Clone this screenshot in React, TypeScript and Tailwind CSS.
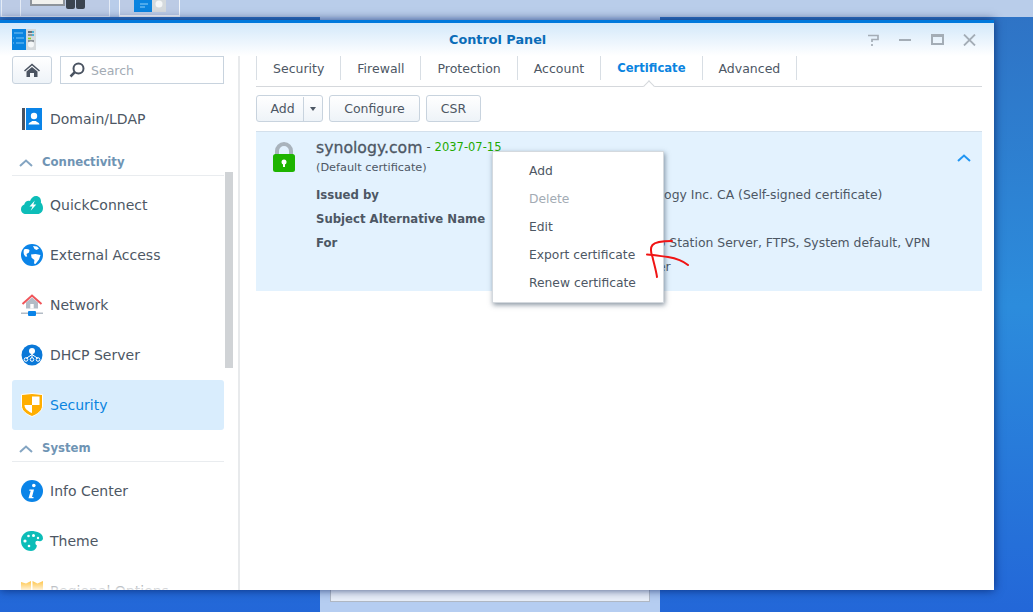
import React from 'react';

const font = "font-['DejaVu_Sans','Liberation_Sans',sans-serif]";

function WindowIcon() {
  return (
    <svg width="24" height="21" viewBox="0 0 24 21">
      <rect x="0" y="0" width="14" height="21" fill="#0a84e0" />
      <rect x="14" y="0" width="10" height="21" fill="#d5dadd" />
      <path d="M2 4h9M4 9h8M4 14h8M1 9h1M1 14h1" stroke="#7cc4f5" strokeWidth="1" />
      <path d="M16 3h4" stroke="#444c55" strokeWidth="1.5" />
      <path d="M20 3h2M20 6h2" stroke="#20a8d8" strokeWidth="1.5" />
      <path d="M16 6h4M16 12h6" stroke="#444c55" strokeWidth="1.2" />
      <path d="M16 9.5h3" stroke="#8ccf20" strokeWidth="1.6" />
      <circle cx="19" cy="15.5" r="3" fill="#f4f7f8" />
    </svg>
  );
}

function DomainIcon() {
  return (
    <svg width="20" height="22" viewBox="0 0 20 22">
      <rect x="0" y="0" width="3" height="22" fill="#4a5361" />
      <rect x="4" y="0" width="16" height="22" fill="#0a84e8" />
      <circle cx="12" cy="8" r="3.2" fill="#fff" />
      <path d="M6.5 16.5c0-2 3-2.6 3.7-3.6h3.6c.7 1 3.7 1.6 3.7 3.6z" fill="#fff" />
    </svg>
  );
}

function QuickConnectIcon() {
  return (
    <svg width="22" height="18" viewBox="0 0 22 18">
      <path d="M5 18c-3 0-5-2-5-4.800 0-2.300 1.300-4 3.300-4.600C3.800 5.500 6.500 4.200 9 5 10 2 12.500 0 15 0c3 0 5 2.300 5 5.200 0 .5 0 1-.2 1.400C21 7.800 22 9.800 22 12c0 3.500-2.400 6-5.500 6z" fill="#0dbdb8" />
      <path d="M13.800 4.500 8.500 10.500h3l-1.800 4.300 5.600-6.300h-3z" fill="#fff" />
    </svg>
  );
}

function GlobeIcon() {
  return (
    <svg width="22" height="22" viewBox="0 0 22 22">
      <circle cx="11" cy="11" r="11" fill="#0a84e8" />
      <path d="M3 5.500c2-.6 4-.6 5.500.4l-.5 2.600-2.500 1.500.7 2.500-1.500.3C3 11.500 2 8.500 3 5.500z" fill="#fff" />
      <path d="M12 2l4 .5 2 2-2.500 1.500-2-1zM10 10.500l4.500-.5 5 1-1.500 4.500-3.500 4.500-1.500-.4.400-3.600-2.800-2.200z" fill="#fff" />
    </svg>
  );
}

function NetworkIcon() {
  return (
    <svg width="22" height="22" viewBox="0 0 22 22">
      <path d="M5 8.500 11 3.500l6 5v6H5z" fill="#b3bcc6" />
      <rect x="9.300" y="10" width="3.400" height="4.500" fill="#fff" />
      <path d="M1.500 10 11 1.500 20.500 10" fill="none" stroke="#f0555a" strokeWidth="2" />
      <rect x="0" y="18.500" width="22" height="1.500" fill="#b3bcc6" />
      <rect x="7" y="17" width="8" height="5" rx="1" fill="#0a84e8" />
    </svg>
  );
}

function DhcpIcon() {
  return (
    <svg width="22" height="22" viewBox="0 0 22 22">
      <circle cx="11" cy="11" r="10.500" fill="#0a78d8" />
      <circle cx="11" cy="7" r="3" fill="#fff" />
      <path d="M11 9v5M11 10.500 5 14.500M11 10.500l6 4" stroke="#fff" strokeWidth="1" fill="none" />
      <circle cx="5" cy="15.500" r="1.800" fill="none" stroke="#fff" strokeWidth="1" />
      <circle cx="11" cy="15.500" r="1.800" fill="none" stroke="#fff" strokeWidth="1" />
      <circle cx="17" cy="15.500" r="1.800" fill="none" stroke="#fff" strokeWidth="1" />
    </svg>
  );
}

function ShieldIcon() {
  return (
    <svg width="24" height="24" viewBox="0 0 24 24">
      <path d="M1.500 1.500 12 .5l10.500 1v11.500c0 4.500-5 8.500-10.500 10.500C6.500 21.500 1.500 17.500 1.500 13z" fill="#ffae00" stroke="#fff" strokeWidth="1" />
      <path d="M12 3.500h7.500v8.500H12zM4.500 12H12v8C8.500 18.500 4.500 16 4.500 12z" fill="#fff" />
    </svg>
  );
}

function InfoIcon() {
  return (
    <svg width="22" height="22" viewBox="0 0 22 22">
      <circle cx="11" cy="11" r="11" fill="#0a84e8" />
      <circle cx="12.800" cy="5.500" r="1.800" fill="#fff" />
      <path d="M8.500 9.500h4.500l-2 7.500h1.500v1.200H7.500l2.200-7.500H8.200z" fill="#fff" />
    </svg>
  );
}

function PaletteIcon() {
  return (
    <svg width="22" height="20" viewBox="0 0 22 20">
      <path d="M10 0c6 0 12 2 12 7.500 0 2.500-3 3-5 2.800-2-.2-2.500 1.800-1.500 3.200 1 1.600-.5 6.500-5.500 6.500C4 20 0 15.500 0 10S4 0 10 0z" fill="#0dbdb8" />
      <circle cx="4" cy="10" r="1.600" fill="#fff" />
      <circle cx="7.500" cy="5" r="1.300" fill="#fff" />
      <circle cx="12.500" cy="4.500" r="1.500" fill="#fff" />
      <circle cx="17" cy="7" r="1.200" fill="#fff" />
      <circle cx="16.500" cy="12" r="2.200" fill="#fff" />
      <circle cx="8" cy="15" r="1.300" fill="#fff" />
    </svg>
  );
}

function RegionalIcon() {
  return (
    <svg width="22" height="22" viewBox="0 0 22 22">
      <path d="M0 2l5 1.500L10 1v16l-5 3-5-2z" fill="#ffae00" />
      <path d="M11.500 1l5 2.500L22 1v16l-5.500 3-5-3z" fill="#ffae00" />
      <circle cx="14" cy="16" r="4" fill="#f0555a" />
    </svg>
  );
}

function LockIcon() {
  return (
    <svg width="22" height="30" viewBox="0 0 22 30">
      <path d="M4 13V9a7 7 0 0 1 14 0v4" fill="none" stroke="#a9b3bc" strokeWidth="4" />
      <rect x="0" y="12" width="22" height="18" rx="2.500" fill="#1eb400" />
      <circle cx="11" cy="20" r="2.500" fill="#fff" />
      <rect x="10" y="20" width="2" height="5" fill="#fff" />
    </svg>
  );
}

function Chevron({ className }: { className: string }) {
  return (
    <svg className={className} width="14" height="8" viewBox="0 0 14 8">
      <path d="M1 7l6-5.500L13 7" fill="none" stroke="currentColor" strokeWidth="2" />
    </svg>
  );
}

function NavItem({ icon, label, active }: { icon: React.ReactNode; label: string; active?: boolean }) {
  return (
    <div className={`flex h-[50px] shrink-0 items-center rounded-[3px] ${active ? 'bg-[#d9edfd] text-[#0a84e0]' : 'text-[#4d5764]'}`}>
      <div className="flex w-[38px] justify-center pl-[2px]">{icon}</div>
      <span className="text-[14px]">{label}</span>
    </div>
  );
}

function NavHeader({ label, h }: { label: string; h: string }) {
  return (
    <div className={`mb-[4px] flex shrink-0 items-center border-b border-[#e9ecef] pt-[7px] text-[#6f94b4] ${h}`}>
      <Chevron className="ml-[7px] mr-[9px] text-[#84a5c2]" />
      <span className="text-[11.7px] font-bold">{label}</span>
    </div>
  );
}

const tabs = ['Security', 'Firewall', 'Protection', 'Account', 'Certificate', 'Advanced'];

function Tabs() {
  return (
    <div className="relative mx-[16px] mr-[12px] flex h-[31px] shrink-0 items-start border-b border-[#d5d8dc]">
      {tabs.map((t) => (
        <div key={t} className={`flex h-[24px] items-center border-l border-[#d8dee4] px-[16px] pt-[2px] ${t === 'Certificate' ? 'text-[11.6px] font-bold text-[#0a84e0]' : 'text-[12.5px] text-[#4d5764]'}`}>
          {t}
        </div>
      ))}
      <div className="h-[24px] border-l border-[#d8dee4]" />
      <div className="absolute left-[389px] top-[26px] h-[8px] w-[8px] rotate-45 border-l border-t border-[#d5d8dc] bg-white" />
    </div>
  );
}

const btn = 'flex h-[27px] items-center justify-center rounded-[3px] border border-[#c8d3de] bg-[linear-gradient(180deg,#ffffff,#eef3f8)] pt-[1px] text-[12.5px] text-[#4d5764]';

function Toolbar() {
  return (
    <div className="ml-[16px] mt-[8px] flex shrink-0 gap-[6px]">
      <div className={`${btn} w-[67px]`}>
        <span className="flex h-full w-[47px] items-center justify-center border-r border-[#c8d3de] pl-[5px]">Add</span>
        <span className="flex flex-1 justify-center">
          <span className="border-x-[3.5px] border-t-[4px] border-x-transparent border-t-[#4d5764]" />
        </span>
      </div>
      <div className={`${btn} w-[91px]`}>Configure</div>
      <div className={`${btn} w-[55px]`}>CSR</div>
    </div>
  );
}

function Row({ label, children }: { label: string; children?: React.ReactNode }) {
  return (
    <div className="flex min-h-[24px] leading-[24px]">
      <span className="w-[314px] shrink-0 text-[11.7px] font-bold text-[#4d5764]">{label}</span>
      <span className="w-[320px] text-[12.4px] text-[#4d5764]">{children}</span>
    </div>
  );
}

function CertCard() {
  return (
    <div className="mx-[16px] mr-[12px] mt-[9px] flex h-[160px] shrink-0 border-t border-[#d3e0ec] bg-[#e3f2fe]">
      <div className="w-[60px] pl-[17px] pt-[10px]">
        <LockIcon />
      </div>
      <div className="flex-1 pt-[5px]">
        <div className="flex h-[21px] items-center">
          <span className="text-[15.7px] text-[#4d5764] [-webkit-text-stroke:0.3px_#4d5764]">synology.com</span>
          <span className="ml-[4px] text-[11.5px] text-[#4d5764]">-</span>
          <span className="ml-[4px] text-[11.5px] text-[#1faa00]">2037-07-15</span>
        </div>
        <div className="mb-[5px] flex h-[20px] items-center text-[11.3px] text-[#4d5764]">(Default certificate)</div>
        <Row label="Issued by">Synology Inc. CA (Self-signed certificate)</Row>
        <Row label="Subject Alternative Name" />
        <Row label="For">Photo Station Server, FTPS, System default, VPN Server</Row>
      </div>
      <div className="pr-[11px] pt-[22px]">
        <Chevron className="text-[#2196f3]" />
      </div>
    </div>
  );
}

const menuItems = ['Add', 'Delete', 'Edit', 'Export certificate', 'Renew certificate'];

function ContextMenu() {
  return (
    <div className="absolute left-[492px] top-[128px] z-20 w-[172px] border border-[#d4d9de] bg-white py-[5px] shadow-[1px_2px_5px_rgba(60,80,100,0.6)]">
      {menuItems.map((m) => (
        <div key={m} className={`flex h-[28px] items-center pl-[36px] text-[12.3px] ${m === 'Delete' ? 'text-[#a3abb4]' : 'text-[#4d5764]'}`}>
          {m}
        </div>
      ))}
    </div>
  );
}

function Scribble() {
  return (
    <svg className="absolute left-[640px] top-[212px] z-30" width="60" height="50" viewBox="0 0 60 50">
      <path d="M32 6C24 6 15 7 12.500 10 10 13 11 18 12.500 22 14 29 16 35 17 42" fill="none" stroke="#f01414" strokeWidth="2" strokeLinecap="round" />
      <path d="M7 19.500C14 20 20 21 28 22 34 23 42 25 48 30" fill="none" stroke="#f01414" strokeWidth="2" strokeLinecap="round" />
    </svg>
  );
}

function Taskbar() {
  return (
    <div className="flex h-[17px] shrink-0 overflow-hidden bg-[#b9cdea]">
      <div className="ml-[1px] h-[17px] w-[20px] border-x border-b border-[#e4ebf6] bg-[#bccbe5]" />
      <div className="relative flex h-[17px] w-[89px] justify-center border-r border-b border-[#e4ebf6] bg-[#bccbe5]">
        <div className="ml-[-16px] flex items-start gap-[1px]">
          <div className="h-[6px] w-[35px] border-2 border-t-0 border-[#8e949b] bg-[#f1f1ee]" />
          <div className="h-[9px] w-[9px] rounded-b-[2px] bg-[#3b4450]" />
          <div className="h-[9px] w-[9px] rounded-b-[2px] bg-[#3b4450]" />
        </div>
      </div>
      <div className="ml-[9px] flex h-[17px] w-[61px] justify-center border-x border-b-2 border-[#f3f6fb] bg-[#bccbe5]">
        <svg width="32" height="12" viewBox="0 0 32 12">
          <rect width="18" height="12" fill="#0a84e0" />
          <rect x="18" width="14" height="12" fill="#d5dadd" />
          <path d="M6 4h8M6 7h5" stroke="#8fd0f8" strokeWidth="1" />
          <circle cx="25" cy="4" r="3.500" fill="#f4f7f8" />
        </svg>
      </div>
    </div>
  );
}

export default function App() {
  return (
    <div className={`${font} relative flex h-[612px] w-[1033px] flex-col overflow-hidden bg-[linear-gradient(180deg,#2f72c4_0%,#2c8cdc_50%,#2367d8_100%)]`}>
      <Taskbar />
      {/* window behind the control panel */}
      <div className="absolute bottom-0 left-[320px] top-[17px] w-[340px] bg-[#b5cdf1]">
        <div className="absolute bottom-[10px] left-[10px] h-[30px] w-[320px] border border-[#b0b8c4] bg-[#e8eef8]" />
      </div>
      <div className="relative z-10 mt-[3px] flex h-[570px] w-[994px] flex-col border-t-[3px] border-[#0078dc] bg-white shadow-[0_0_9px_rgba(0,25,90,0.75)]">
        <div className="flex h-[33px] shrink-0 items-center bg-[linear-gradient(180deg,#d3e8fa,#ffffff)] pl-[12px]">
          <WindowIcon />
          <div className="flex-1 pl-[413px] text-left text-[12.8px] font-semibold text-[#0a6cb8]">Control Panel</div>
          <div className="flex items-center pr-[18px] text-[#a4adb6]">
            <svg className="mr-[20px]" width="12" height="12" viewBox="0 0 12 12">
              <path d="M1 1.500h10V5.500H5V8M5 10v2" fill="none" stroke="currentColor" strokeWidth="1.700" />
            </svg>
            <div className="mr-[20px] h-[2px] w-[12px] bg-current" />
            <div className="mr-[19px] h-[11px] w-[13px] border-[2px] border-t-[3px] border-current" />
            <svg width="13" height="12" viewBox="0 0 13 12">
              <path d="M1 .5l11 11M12 .5l-11 11" fill="none" stroke="currentColor" strokeWidth="1.800" />
            </svg>
          </div>
        </div>
        <div className="flex min-h-0 flex-1">
          <div className="relative flex w-[240px] shrink-0 flex-col overflow-hidden border-r-2 border-[#e8eaec] pl-[12px] pr-[14px]">
            <div className="flex shrink-0 gap-[8px]">
              <div className="flex h-[28px] w-[40px] items-center justify-center rounded-[3px] border border-[#c8d3de] bg-[linear-gradient(180deg,#ffffff,#eef3f8)]">
                <svg width="16" height="14" viewBox="0 0 16 14">
                  <path d="M0 7.500 8 .5l8 7-1 1L8 2.500 1 8.500z" fill="#4a5361" />
                  <path d="M2.500 8.500 8 4l5.500 4.500V14H10V10H6v4H2.500z" fill="#4a5361" />
                </svg>
              </div>
              <div className="flex h-[28px] flex-1 items-center gap-[6px] border border-[#c8d3de] pl-[8px]">
                <svg width="16" height="16" viewBox="0 0 16 16">
                  <circle cx="9.500" cy="6.500" r="5" fill="none" stroke="#4a5361" strokeWidth="2" />
                  <path d="M5.800 10.200 1.500 14.500" stroke="#4a5361" strokeWidth="2.500" />
                </svg>
                <span className="pt-[2px] text-[12.5px] text-[#a3abb4]">Search</span>
              </div>
            </div>
            <div className="mt-[10px] flex flex-col">
              <NavItem icon={<DomainIcon />} label="Domain/LDAP" />
              <NavHeader label="Connectivity" h="h-[32px]" />
              <NavItem icon={<QuickConnectIcon />} label="QuickConnect" />
              <NavItem icon={<GlobeIcon />} label="External Access" />
              <NavItem icon={<NetworkIcon />} label="Network" />
              <NavItem icon={<DhcpIcon />} label="DHCP Server" />
              <NavItem icon={<ShieldIcon />} label="Security" active />
              <NavHeader label="System" h="h-[32px]" />
              <NavItem icon={<InfoIcon />} label="Info Center" />
              <NavItem icon={<PaletteIcon />} label="Theme" />
              <NavItem icon={<RegionalIcon />} label="Regional Options" />
            </div>
            <div className="absolute left-[225px] top-[116px] h-[196px] w-[8px] bg-[#d0d3d6]" />
            <div className="absolute bottom-0 left-0 h-[12px] w-full bg-[linear-gradient(180deg,rgba(255,255,255,0.1),rgba(255,255,255,0.85))]" />
          </div>
          <div className="relative flex min-w-0 flex-1 flex-col">
            <Tabs />
            <Toolbar />
            <CertCard />
          </div>
        </div>
        <ContextMenu />
        <Scribble />
      </div>
    </div>
  );
}
